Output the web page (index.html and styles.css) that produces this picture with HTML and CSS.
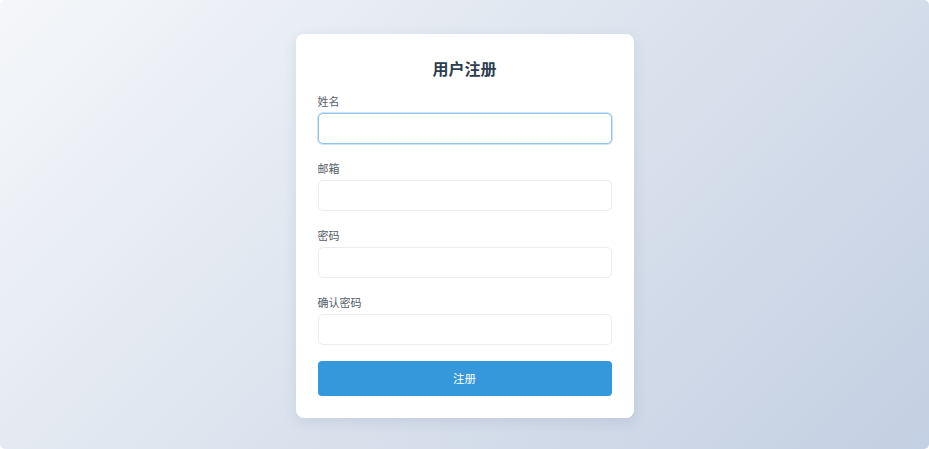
FILE: index.html
```html
<!DOCTYPE html>
<html lang="zh-CN">
<head>
<meta charset="utf-8">
<title>用户注册</title>
<link rel="stylesheet" href="styles.css">
</head>
<body>
<main class="page">
  <form class="card">
    <h1 class="title">用户注册</h1>
    <div class="group">
      <label class="label" for="name">姓名</label>
      <input class="input input-focus" id="name" type="text" autofocus>
    </div>
    <div class="group">
      <label class="label" for="email">邮箱</label>
      <input class="input" id="email" type="email">
    </div>
    <div class="group">
      <label class="label" for="pwd">密码</label>
      <input class="input" id="pwd" type="password">
    </div>
    <div class="group">
      <label class="label" for="pwd2">确认密码</label>
      <input class="input" id="pwd2" type="password">
    </div>
    <button class="btn" type="button">注册</button>
  </form>
</main>
</body>
</html>
```
FILE: styles.css
```css
* { box-sizing: border-box; }
html, body { margin: 0; padding: 0; background: #ffffff; }
body {
  font-family: "Noto Sans CJK SC", "Noto Sans", sans-serif;
}
.page {
  width: 929px;
  height: 449px;
  padding-top: 2px;
  border-radius: 5px;
  background: linear-gradient(135deg, #f5f7fa 0%, #c3cfe2 100%);
  display: flex;
  align-items: center;
  justify-content: center;
}
.card {
  width: 338px;
  background: #ffffff;
  border-radius: 8px;
  padding: 22px;
  box-shadow: 0 4px 14px rgba(60, 80, 120, 0.12);
  display: flex;
  flex-direction: column;
}
.title {
  margin: 0 0 12px;
  font-size: 16px;
  line-height: 24px;
  font-weight: 700;
  color: #2c3e50;
  text-align: center;
}
.group {
  display: flex;
  flex-direction: column;
  margin-bottom: 15px;
}
.label {
  font-size: 11px;
  line-height: 18px;
  color: #555e6a;
  margin-bottom: 3px;
}
.input {
  height: 31px;
  border: 1px solid #ececef;
  border-radius: 5px;
  padding: 0 8px;
  font-size: 13px;
  font-family: inherit;
  outline: none;
  background: #ffffff;
}
.input-focus {
  border-color: #8fc3ea;
  box-shadow: 0 0 0 1px rgba(52, 152, 219, 0.25);
}
.btn {
  margin-top: 1px;
  height: 35px;
  border: none;
  border-radius: 4px;
  background: #3498db;
  color: #ffffff;
  font-family: inherit;
  font-size: 11.5px;
  cursor: pointer;
}
```
